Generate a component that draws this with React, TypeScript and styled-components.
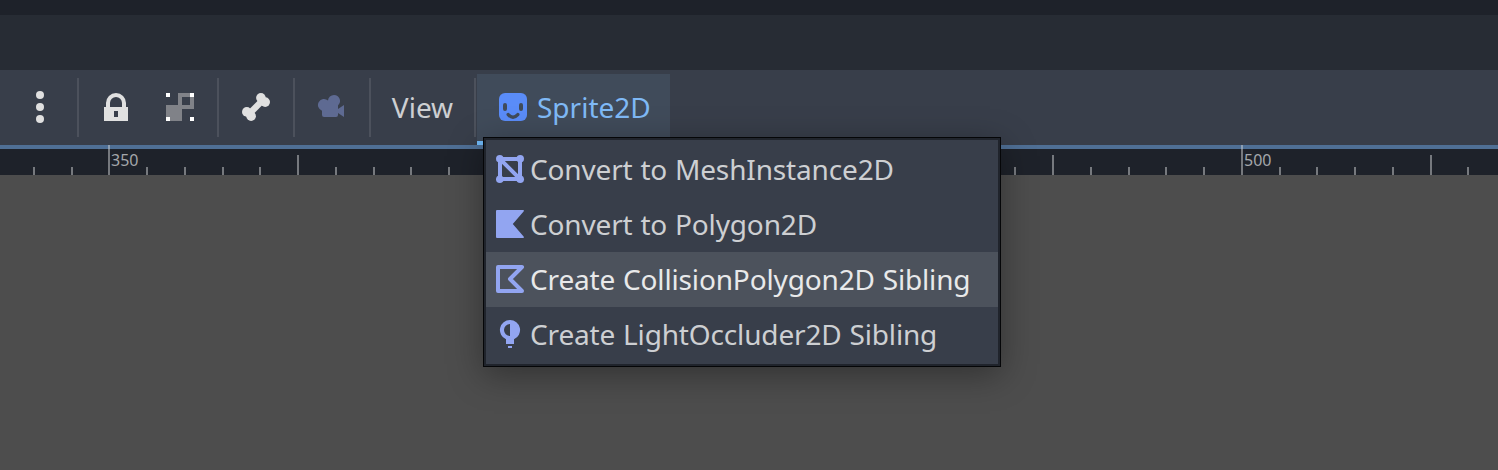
import React from 'react';
import styled, { createGlobalStyle, css } from 'styled-components';

const GlobalStyle = createGlobalStyle`
  * { box-sizing: border-box; }
  html, body { margin: 0; overflow: hidden; }
  body { background: #4d4d4d; font-family: 'Noto Sans', sans-serif; }
`;

const Editor = styled.div`
  position: relative;
  display: flex;
  flex-direction: column;
  width: 1498px;
  height: 470px;
  overflow: hidden;
  background: #4d4d4d;
  color: #cdcfd2;
  font-size: 28px;
`;

const TitleStrip = styled.div`
  height: 15px;
  flex: none;
  background: #1e222a;
`;

const TabStrip = styled.div`
  height: 55px;
  flex: none;
  background: #272c34;
`;

const Toolbar = styled.div`
  display: flex;
  flex: none;
  height: 75px;
  background: #383e4a;
`;

const ToolGroup = styled.div<{ $width: number }>`
  display: flex;
  justify-content: center;
  align-items: center;
  gap: 32px;
  width: ${(p) => p.$width}px;
  padding-bottom: 1px;
`;

const MenuGroup = styled(ToolGroup)`
  padding-left: 3px;
`;

const Separator = styled.div`
  width: 2px;
  height: 59px;
  margin-top: 8px;
  background: #4c515c;
`;

const Icon = styled.svg.attrs({ viewBox: '0 0 16 16' })`
  display: block;
  flex: none;
  width: 32px;
  height: 32px;
`;

const SpriteButton = styled.div`
  display: flex;
  align-items: center;
  gap: 8px;
  width: 193px;
  height: 71px;
  margin: 4px 0 0 1px;
  padding: 0 0 1px 20px;
  border-bottom: 4px solid #70bafa;
  background: #404b5a;
  color: #7fb9f6;
`;

const Label = styled.span`
  line-height: 38px;
  white-space: nowrap;
`;

const Ruler = styled.div`
  display: flex;
  flex: none;
  align-items: flex-end;
  height: 30px;
  background: #1e222a;
  box-shadow: inset 0 4px #4f6f95;
`;

const tickHeights = { minor: 8, half: 20, major: 30 };

const Tick = styled.div<{ $kind: keyof typeof tickHeights }>`
  flex: none;
  height: ${(p) => tickHeights[p.$kind]}px;
  border-left: 2px solid rgba(205, 207, 210, 0.5);
  ${(p) =>
    p.$kind === 'major' &&
    css`
      padding: 4px 0 0 1px;
      color: #a4a7ab;
      font-size: 16px;
      line-height: 22px;
    `}
`;

const Menu = styled.div`
  position: absolute;
  left: 483px;
  top: 137px;
  width: 518px;
  height: 230px;
  padding: 4px 2px;
  border: 1px solid #050608;
  box-shadow: inset 0 0 0 2px #20242c, 0 8px 32px rgba(0, 0, 0, 0.35);
  background: #383e4a;
  letter-spacing: -0.15px;
  word-spacing: 0.7px;
`;

const MenuItem = styled.div<{ $active?: boolean }>`
  display: flex;
  align-items: center;
  gap: 4px;
  height: 55px;
  padding: 0 0 1px 8px;
  background: ${(p) => (p.$active ? '#4c525c' : 'transparent')};
  color: ${(p) => (p.$active ? '#e8e9ea' : '#cdcfd2')};
`;

const origin = 108.3;
const step = 37.75;
const tickX = (k: number) => Math.round(origin + step * k);
const ticks = Array.from({ length: 39 }, (_, i) => i - 2);

const tickKind = (k: number) => (k % 30 === 0 ? 'major' : k % 5 === 0 ? 'half' : 'minor');

const violet = '#92a5f1';

export default function App() {
  return (
    <Editor>
      <GlobalStyle />
      <TitleStrip />
      <TabStrip />
      <Toolbar>
        <MenuGroup $width={77}>
          <Icon fill="#e0e0e0">
            <circle cx="8" cy="2" r="2" />
            <circle cx="8" cy="8" r="2" />
            <circle cx="8" cy="14" r="2" />
          </Icon>
        </MenuGroup>
        <Separator />
        <ToolGroup $width={138}>
          <Icon fill="#e0e0e0">
            <path
              fillRule="evenodd"
              d="M8 1a5 5 0 0 0-5 5v2H2v7h12V8h-1V6a5 5 0 0 0-5-5zm0 2a3 3 0 0 1 3 3v2H5V6a3 3 0 0 1 3-3zm-1 7h2v3H7z"
            />
          </Icon>
          <Icon>
            <path fill="#808288" fillRule="evenodd" d="M7 1h8v8H9v6H1V7h6zm2 2v4h4V3z" />
            <path fill="#fff" d="M1 1h2v2H1zM13 1h2v2h-2zM1 13h2v2H1zM13 13h2v2h-2z" />
          </Icon>
        </ToolGroup>
        <Separator />
        <ToolGroup $width={74}>
          <Icon fill="#e0e0e0">
            <circle cx="10.45" cy="3.4" r="2.4" />
            <circle cx="12.6" cy="5.55" r="2.4" />
            <circle cx="3.4" cy="10.45" r="2.4" />
            <circle cx="5.55" cy="12.6" r="2.4" />
            <path d="M4.5 11.5l7-7" stroke="#e0e0e0" strokeWidth="3.1" />
          </Icon>
        </ToolGroup>
        <Separator />
        <ToolGroup $width={74}>
          <Icon fill="#5e6a92">
            <path d="M9 2a3 3 0 0 0-3 2.777 3 3 0 1 0-3 5.047V12a1 1 0 0 0 1 1h6a1 1 0 0 0 1-1v-1l3 2V7l-3 2V7.23A3 3 0 0 0 9 2z" />
          </Icon>
        </ToolGroup>
        <Separator />
        <ToolGroup $width={103}>
          <Label>View</Label>
        </ToolGroup>
        <Separator />
        <SpriteButton>
          <Icon>
            <rect x="1" y="1" width="14" height="14" rx="3" fill="#5a8cf8" />
            <path
              d="M4 7v2M12 7v2"
              fill="none"
              stroke="#404b5a"
              strokeWidth="2"
              strokeLinecap="round"
            />
            <path
              d="M5.6 11.8q2.4 2.6 4.8 0"
              fill="none"
              stroke="#404b5a"
              strokeWidth="1.7"
              strokeLinecap="round"
            />
          </Icon>
          <Label>Sprite2D</Label>
        </SpriteButton>
      </Toolbar>
      <Ruler>
        <Tick $kind="minor" style={{ marginLeft: tickX(-2), width: tickX(-1) - tickX(-2) }} />
        {ticks.slice(1).map((k) => (
          <Tick key={k} $kind={tickKind(k)} style={{ width: tickX(k + 1) - tickX(k) }}>
            {k === 0 ? '350' : k === 30 ? '500' : null}
          </Tick>
        ))}
      </Ruler>
      <Menu>
        <MenuItem>
          <Icon fill={violet}>
            <path d="M3 3h10v10H3zM3 3l10 10" fill="none" stroke={violet} strokeWidth="2" />
            <circle cx="2.9" cy="2.9" r="1.9" />
            <circle cx="13.1" cy="2.9" r="1.9" />
            <circle cx="2.9" cy="13.1" r="1.9" />
            <circle cx="13.1" cy="13.1" r="1.9" />
          </Icon>
          <Label>Convert to MeshInstance2D</Label>
        </MenuItem>
        <MenuItem>
          <Icon fill={violet}>
            <path d="M1.5 1h13q.8.2.3.8L9.4 8l5.4 6.2q.5.6-.3.8h-13q-.5 0-.5-.5v-13q0-.5.5-.5z" />
          </Icon>
          <Label>Convert to Polygon2D</Label>
        </MenuItem>
        <MenuItem $active>
          <Icon>
            <path
              d="M14 2H2v12h12L8 8z"
              fill="none"
              stroke={violet}
              strokeWidth="2"
              strokeLinejoin="round"
            />
          </Icon>
          <Label>Create CollisionPolygon2D Sibling</Label>
        </MenuItem>
        <MenuItem>
          <Icon fill={violet}>
            <path
              fillRule="evenodd"
              d="M8 1a5 5 0 0 0-2 9.6V13h4v-2.4A5 5 0 0 0 8 1zm0 2v6a3 3 0 0 1 0-6z"
            />
            <path d="M7 14h2v1H7z" />
          </Icon>
          <Label>Create LightOccluder2D Sibling</Label>
        </MenuItem>
      </Menu>
    </Editor>
  );
}
